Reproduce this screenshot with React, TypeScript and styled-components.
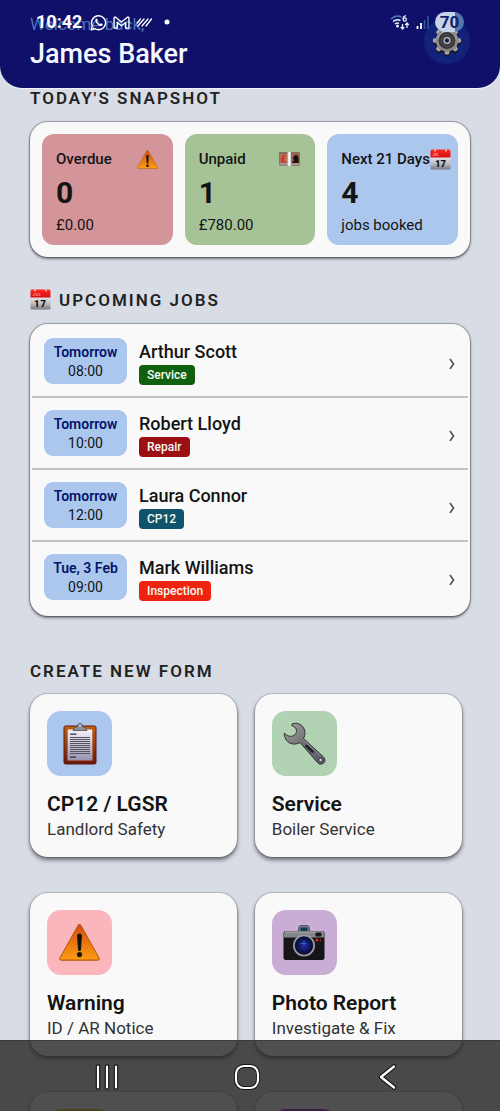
import React from "react";
import styled, { createGlobalStyle } from "styled-components";

const GlobalStyle = createGlobalStyle`
  *, *::before, *::after { box-sizing: border-box; }
  body { margin: 0; background: #d8dce5; }
  h1, h2, h3, p, ul { margin: 0; padding: 0; }
  button { font: inherit; color: inherit; border: 0; margin: 0; padding: 0; cursor: pointer; text-align: left; }
  svg { display: block; flex: none; }
`;

const Screen = styled.div`
  position: relative;
  height: 100vh;
  overflow: hidden;
  background: #d8dce5;
  color: #141414;
  font-family: Roboto, "Liberation Sans", sans-serif;
`;

/* ---------- header ---------- */

const Header = styled.header`
  display: flex;
  justify-content: space-between;
  align-items: flex-start;
  height: 88px;
  padding: 13px 30px 0;
  border-radius: 0 0 22px 22px;
  background: #10106a;
  box-shadow: 0 1px 1px #f2f6fa;
`;

const Greeting = styled.p`
  font-size: 17px;
  line-height: 22px;
  color: #4f74b8;
`;

const UserName = styled.h1`
  font-size: 27px;
  font-weight: 500;
  line-height: 38px;
  color: #f4f9ff;
`;

const SettingsButton = styled.button`
  display: grid;
  place-items: center;
  width: 46px;
  height: 46px;
  margin-top: 5px;
  border-radius: 50%;
  background: #12227a;
`;

const StatusBar = styled.div`
  position: absolute;
  top: 0;
  left: 0;
  right: 0;
  display: flex;
  justify-content: space-between;
  align-items: center;
  height: 44px;
  padding: 0 36px;
  color: #ffffff;
  pointer-events: none;
`;

const StatusGroup = styled.div`
  display: flex;
  align-items: center;
  gap: 6px;
`;

const Clock = styled.span`
  margin-right: 2px;
  font-size: 18px;
  font-weight: 700;
  line-height: 20px;
`;

const Battery = styled.span`
  width: 29px;
  height: 20px;
  border-radius: 10px;
  background: linear-gradient(90deg, #c6d1ea 70%, #5478ae 70%);
  color: #0d2468;
  font-size: 17px;
  font-weight: 700;
  line-height: 20px;
  text-align: center;
`;

/* ---------- sections ---------- */

const Content = styled.main`
  padding: 0 30px;
`;

const SectionTitle = styled.h2<{ $top: number }>`
  display: flex;
  align-items: center;
  gap: 8px;
  margin-top: ${(p) => p.$top}px;
  font-size: 17px;
  font-weight: 600;
  line-height: 20px;
  letter-spacing: 2px;
  color: #222222;
`;

const Panel = styled.section`
  border-radius: 18px;
  background: #f9f9f9;
  box-shadow: 0 0 1px 1px rgba(0, 0, 0, 0.3), 0 2px 3px rgba(0, 0, 0, 0.45);
`;

const Snapshot = styled(Panel)`
  display: grid;
  grid-template-columns: repeat(3, minmax(0, 1fr));
  gap: 12px;
  margin-top: 14px;
  padding: 12px;
`;

const Tile = styled.article<{ $tone: string }>`
  padding: 14px 8px 11px 14px;
  border-radius: 12px;
  background: ${(p) => p.$tone};
`;

const TileHead = styled.div<{ $inset: number }>`
  display: flex;
  justify-content: space-between;
  align-items: center;
  height: 22px;
  padding-right: ${(p) => p.$inset}px;
`;

const TileLabel = styled.h3`
  font-size: 15px;
  font-weight: 500;
  line-height: 22px;
  white-space: nowrap;
`;

const TileValue = styled.p`
  font-size: 30px;
  font-weight: 700;
  line-height: 46px;
`;

const TileNote = styled.p`
  font-size: 15px;
  line-height: 18px;
`;

/* ---------- jobs ---------- */

const JobList = styled(Panel).attrs({ as: "ul" })`
  margin-top: 14px;
  padding: 2px;
  list-style: none;
`;

const JobItem = styled.li`
  border-bottom: 2px solid #c2c2c2;
  &:last-child { border-bottom-color: transparent; }
`;

const JobButton = styled.button`
  display: flex;
  align-items: center;
  width: 100%;
  height: 70px;
  padding: 0 12px;
  background: none;
`;

const When = styled.span`
  display: flex;
  flex-direction: column;
  align-items: center;
  min-width: 83px;
  padding: 5px 9px 3px;
  border-radius: 9px;
  background: #abc7ee;
  font-size: 14px;
  line-height: 19px;
`;

const Day = styled.strong`
  font-weight: 600;
  color: #04146a;
`;

const Who = styled.span`
  display: flex;
  flex-direction: column;
  align-items: flex-start;
  flex: 1;
  margin-left: 12px;
  padding-top: 2px;
`;

const Customer = styled.span`
  font-size: 18px;
  font-weight: 500;
  line-height: 26px;
`;

const Tag = styled.span<{ $tone: string }>`
  padding: 0 8px;
  border-radius: 4px;
  background: ${(p) => p.$tone};
  color: #f4fbf4;
  font-size: 12px;
  font-weight: 500;
  line-height: 20px;
`;

/* ---------- forms ---------- */

const FormGrid = styled.div`
  display: grid;
  grid-template-columns: 47% 47%;
  gap: 36px 18px;
  margin-top: 13px;
`;

const FormCard = styled.button`
  display: flex;
  flex-direction: column;
  align-items: flex-start;
  padding: 17px 17px 15px;
  border-radius: 18px;
  background: #f9f9f9;
  box-shadow: 0 0 1px 1px rgba(0, 0, 0, 0.16), 0 3px 4px rgba(0, 0, 0, 0.5);
`;

const FormIcon = styled.span<{ $tone: string }>`
  display: grid;
  place-items: center;
  width: 65px;
  height: 65px;
  margin-bottom: 15px;
  border-radius: 14px;
  background: ${(p) => p.$tone};
`;

const FormName = styled.span`
  font-size: 21px;
  font-weight: 600;
  line-height: 26px;
`;

const FormNote = styled.span`
  font-size: 17px;
  line-height: 25px;
  color: #333333;
`;

/* ---------- system navigation ---------- */

const NavBar = styled.nav`
  position: absolute;
  left: 0;
  right: 0;
  bottom: 0;
  display: flex;
  justify-content: space-between;
  align-items: center;
  height: 71px;
  padding: 2px 95px 0 89px;
  border-top: 1px solid #3c3d38;
  background: rgba(36, 36, 36, 0.8);
`;

const NavButton = styled.button`
  display: grid;
  place-items: center;
  width: 35px;
  height: 44px;
  background: none;
`;

/* ---------- drawings ---------- */

const Calendar = ({ size = 21 }: { size?: number }) => (
  <svg width={size} height={size} viewBox="0 0 42 42" aria-hidden="true">
    <defs>
      <linearGradient id="calPage" x1="0" y1="0" x2="0" y2="1">
        <stop offset="0" stopColor="#f2f2f4" />
        <stop offset="0.6" stopColor="#bcbcc4" />
        <stop offset="1" stopColor="#77777f" />
      </linearGradient>
      <linearGradient id="calTop" x1="0" y1="0" x2="0" y2="1">
        <stop offset="0" stopColor="#ff2a20" />
        <stop offset="1" stopColor="#d40d10" />
      </linearGradient>
    </defs>
    <rect x="1" y="12" width="40" height="29" rx="2" fill="url(#calPage)" />
    <path d="M1 17V4q0-3 3-3h34q3 0 3 3v13z" fill="url(#calTop)" />
    <circle cx="10" cy="3" r="2" fill="#f6c9c6" />
    <circle cx="32" cy="3" r="2" fill="#f6c9c6" />
    <text x="5" y="14" fontFamily="Roboto, sans-serif" fontSize="7" fontWeight="700" fill="#ffb0aa">JUL</text>
    <text x="21" y="36" textAnchor="middle" fontFamily="Roboto, sans-serif" fontSize="19" fontWeight="900" fill="#111">17</text>
  </svg>
);

const Warning = ({ size }: { size: number }) => (
  <svg width={size} height={size} viewBox="0 0 40 40" aria-hidden="true">
    <defs>
      <linearGradient id="warn" x1="0" y1="0" x2="0" y2="1">
        <stop offset="0" stopColor="#d8481a" />
        <stop offset="0.5" stopColor="#e8760f" />
        <stop offset="1" stopColor="#fb9d12" />
      </linearGradient>
    </defs>
    <path d="M18.600 3.400q1.400-2 2.800 0L39 35q.8 2.200-1.400 2.200H2.400Q.2 37.200 1 35z" fill="url(#warn)" stroke="#b4580f" strokeWidth="1" />
    <path d="M17.600 13.500q0-2.300 2.400-2.300t2.400 2.300l-.9 13q-.2 1.800-1.500 1.800t-1.500-1.800z" fill="#15130f" />
    <circle cx="20" cy="31.800" r="2.500" fill="#15130f" />
  </svg>
);

const Banknotes = () => (
  <svg width="21" height="14" viewBox="0 0 42 28" aria-hidden="true">
    <rect x="0.500" y="0.500" width="41" height="27" rx="1" fill="#76584f" />
    <rect x="1" y="21" width="40" height="6" fill="#a99189" />
    <rect x="2" y="3" width="38" height="18" fill="#a0654f" />
    <rect x="3" y="4" width="13" height="17" fill="#b07a66" />
    <text x="4" y="20" fontFamily="Roboto, sans-serif" fontSize="18" fontWeight="900" fill="#e2281c">£</text>
    <path d="M26 22q1-4 4-5-3-3-1-8 3-5 8-2 3 2 2 15z" fill="#17110f" />
    <rect x="17" y="0" width="7" height="28" fill="#d5d5d8" />
    <rect x="19" y="0" width="3" height="28" fill="#f5f5f7" />
  </svg>
);

const Gear = () => (
  <svg width="30" height="30" viewBox="0 0 60 60" aria-hidden="true">
    <defs>
      <linearGradient id="gear" x1="0" y1="0" x2="0" y2="1">
        <stop offset="0" stopColor="#b9b9b9" />
        <stop offset="1" stopColor="#807d79" />
      </linearGradient>
    </defs>
    {[{ dy: 4, fill: "#17161d" }, { dy: 0, fill: "url(#gear)" }].map((layer) => (
      <g key={layer.dy} transform={`translate(0 ${layer.dy})`} fill={layer.fill}>
        <circle cx="30" cy="29" r="22" />
        {[0, 45, 90, 135, 180, 225, 270, 315].map((a) => (
          <path key={a} d="M24 10l2-8q4-2 8 0l2 8z" transform={`rotate(${a} 30 29)`} />
        ))}
      </g>
    ))}
    <circle cx="30" cy="29" r="17" fill="#343338" />
    <circle cx="30" cy="29" r="12" fill="none" stroke="#59585c" strokeWidth="2" />
    <circle cx="30" cy="29" r="7.500" fill="#a9a7a6" />
    <circle cx="30" cy="29" r="4" fill="#10154e" />
  </svg>
);

const Clipboard = () => (
  <svg width="34" height="42" viewBox="0 0 68 84" aria-hidden="true">
    <defs>
      <linearGradient id="board" x1="0" y1="0" x2="0" y2="1">
        <stop offset="0" stopColor="#c8600f" />
        <stop offset="1" stopColor="#6e1510" />
      </linearGradient>
      <linearGradient id="sheet" x1="0" y1="0" x2="0" y2="1">
        <stop offset="0" stopColor="#f4f4fa" />
        <stop offset="1" stopColor="#9a94b0" />
      </linearGradient>
    </defs>
    <rect x="2" y="6" width="64" height="76" rx="3" fill="url(#board)" stroke="#571b12" strokeWidth="2" />
    <path d="M9 14h50v61H9z" fill="#b9a596" />
    <path d="M10 13h48v61H10z" fill="url(#sheet)" />
    <path d="M14 22h13M14 68h12" stroke="#33333b" strokeWidth="2.500" />
    <path d="M14 29h40M14 33h40M14 37h40M14 41h40M14 45h40M14 49h40M14 53h40M14 57h40M14 61h40" stroke="#55535f" strokeWidth="2" />
    <path d="M20 15q2-7 9-8 0-6 5-6t5 6q7 1 9 8z" fill="#8d9097" stroke="#44464c" strokeWidth="1.500" />
    <circle cx="34" cy="5" r="2" fill="#dfe3e8" />
  </svg>
);

const Wrench = () => (
  <svg width="43" height="43" viewBox="0 0 86 86" aria-hidden="true">
    <defs>
      <linearGradient id="steel" x1="0" y1="0" x2="1" y2="1">
        <stop offset="0" stopColor="#a2a2a4" />
        <stop offset="0.450" stopColor="#737376" />
        <stop offset="1" stopColor="#5b5768" />
      </linearGradient>
    </defs>
    <path
      d="M18 4C30-1 43 7 44 21c0 5-1 8-3 12l40 37c5 5 3 13-4 14-3 1-6 0-8-3L34 41C22 48 8 43 4 31c-2-4-2-7-1-9 4 5 10 8 16 6 8-2 10-11 6-16-2-3-5-4-7-4z"
      fill="url(#steel)"
      stroke="#303036"
      strokeWidth="2"
    />
    <path d="M47 48l12 11" stroke="#25232d" strokeWidth="6" strokeLinecap="round" />
    <path d="M43 38l32 30" stroke="#a3a1ab" strokeWidth="1.500" />
    <circle cx="75" cy="76" r="3.500" fill="#dfeee0" stroke="#33303d" strokeWidth="2" />
  </svg>
);

const Camera = () => (
  <svg width="42" height="36" viewBox="0 0 84 72" aria-hidden="true">
    <defs>
      <radialGradient id="lens">
        <stop offset="0" stopColor="#2430a0" />
        <stop offset="0.500" stopColor="#141a70" />
        <stop offset="1" stopColor="#080a26" />
      </radialGradient>
    </defs>
    <path d="M30 14l2-10q1-3 4-3h12q3 0 4 3l2 10z" fill="#77797f" stroke="#3d3f45" strokeWidth="1.500" />
    <rect x="35" y="5" width="14" height="7" rx="1" fill="#153d63" />
    <rect x="1" y="12" width="82" height="58" rx="5" fill="#161618" />
    <path d="M2 25v-8q0-4 4-4h72q4 0 4 4v8z" fill="#85868b" />
    <path d="M4 14h76" stroke="#c9cacd" strokeWidth="1.500" />
    <rect x="65" y="15" width="12" height="8" rx="2" fill="#17181c" />
    <circle cx="42" cy="41" r="22" fill="#9b9ca3" />
    <circle cx="42" cy="41" r="18.500" fill="url(#lens)" />
    <path d="M35 37h12M42 31v9" stroke="#3063c4" strokeWidth="2" />
    <circle cx="68" cy="30" r="3" fill="#f02418" />
    <path d="M75 28v5" stroke="#8d2a25" strokeWidth="2" />
  </svg>
);

const Chevron = () => (
  <svg width="8" height="16" viewBox="0 0 8 16" aria-hidden="true">
    <path d="M2 6l3.500 5L2 16" fill="none" stroke="#5c5c5c" strokeWidth="1.800" />
  </svg>
);

const WhatsApp = () => (
  <svg width="17" height="17" viewBox="0 0 34 34" aria-hidden="true" fill="none" stroke="#fff" strokeWidth="2.800">
    <path d="M2.500 31.500l2-8A14 14 0 1 1 10 29.500z" strokeLinejoin="round" />
    <path d="M11 10q2-2 3.500 0l1 3-1.500 2q1.500 4 5.500 5.500l2-2 3.500 1.500q1 2-1 3.500-3 1.500-8-2-7-6-5-11.500z" fill="#fff" stroke="none" />
  </svg>
);

const Mail = () => (
  <svg width="17" height="13" viewBox="0 0 36 28" aria-hidden="true" fill="none" stroke="#fff" strokeWidth="3" strokeLinejoin="round">
    <path d="M2 26V4q0-2 2.500-2L18 13 31.500 2Q34 2 34 4v22h-7V14l-9 7-9-7v12z" />
  </svg>
);

const Stripes = () => (
  <svg width="16" height="10" viewBox="0 0 32 20" aria-hidden="true" stroke="#fff" strokeWidth="2.600" strokeLinecap="round">
    <path d="M2 12L9 4M4 18L16 4M12 18L24 4M20 18L31 4" />
  </svg>
);

const Wifi = () => (
  <svg width="20" height="16" viewBox="0 0 40 32" aria-hidden="true" fill="none" stroke="#e6f1fb" strokeWidth="3">
    <path d="M2 10Q12 1 23 6" stroke="#4c7fb4" />
    <path d="M6 15q7-6 15-2M10 20q4-3 8-1" />
    <circle cx="15" cy="24" r="1.500" fill="#e6f1fb" />
    <path d="M32 3q-6 2-6 7" strokeWidth="2.500" />
    <circle cx="29.500" cy="11" r="3.200" strokeWidth="2.500" />
    <path d="M25 20v9m-3.500-3l3.500 4 3.500-4M34 28v-9m-3.500 3l3.500-4 3.500 4" strokeWidth="2.500" />
  </svg>
);

const Signal = () => (
  <svg width="13" height="13" viewBox="0 0 13 13" aria-hidden="true">
    <path d="M1.500 10v3M5 7v6" stroke="#fff" strokeWidth="1.800" />
    <path d="M8.500 4v9M12 0v13" stroke="#2b5f9c" strokeWidth="1.500" />
  </svg>
);

/* ---------- data ---------- */

const jobs = [
  { day: "Tomorrow", time: "08:00", name: "Arthur Scott", tag: "Service", tone: "#10600f" },
  { day: "Tomorrow", time: "10:00", name: "Robert Lloyd", tag: "Repair", tone: "#9c1013" },
  { day: "Tomorrow", time: "12:00", name: "Laura Connor", tag: "CP12", tone: "#10536c" },
  { day: "Tue, 3 Feb", time: "09:00", name: "Mark Williams", tag: "Inspection", tone: "#ee2410" },
];

const forms = [
  { name: "CP12 / LGSR", note: "Landlord Safety", tone: "#abc7ee", icon: <Clipboard /> },
  { name: "Service", note: "Boiler Service", tone: "#b1d3b3", icon: <Wrench /> },
  { name: "Warning", note: "ID / AR Notice", tone: "#f9b7bc", icon: <Warning size={41} /> },
  { name: "Photo Report", note: "Investigate & Fix", tone: "#c9add4", icon: <Camera /> },
];

const upcomingTones = ["#e0a020", "#9b00be"];

export default function App() {
  return (
    <>
      <GlobalStyle />
      <Screen>
        <Header>
          <div>
            <Greeting>Welcome back,</Greeting>
            <UserName>James Baker</UserName>
          </div>
          <SettingsButton aria-label="Settings">
            <Gear />
          </SettingsButton>
        </Header>
        <StatusBar>
          <StatusGroup>
            <Clock>10:42</Clock>
            <WhatsApp />
            <Mail />
            <Stripes />
            <svg width="24" height="6" viewBox="0 0 24 6" aria-hidden="true">
              <circle cx="9" cy="3" r="2.500" fill="#fff" />
            </svg>
          </StatusGroup>
          <StatusGroup>
            <Wifi />
            <Signal />
            <Battery>70</Battery>
          </StatusGroup>
        </StatusBar>

        <Content>
          <SectionTitle $top={0}>TODAY'S SNAPSHOT</SectionTitle>
          <Snapshot>
            <Tile $tone="#d4959a">
              <TileHead $inset={7}>
                <TileLabel>Overdue</TileLabel>
                <Warning size={21} />
              </TileHead>
              <TileValue>0</TileValue>
              <TileNote>£0.00</TileNote>
            </Tile>
            <Tile $tone="#a6c398">
              <TileHead $inset={7}>
                <TileLabel>Unpaid</TileLabel>
                <Banknotes />
              </TileHead>
              <TileValue>1</TileValue>
              <TileNote>£780.00</TileNote>
            </Tile>
            <Tile $tone="#abc7ee">
              <TileHead $inset={0}>
                <TileLabel>Next 21 Days</TileLabel>
                <Calendar />
              </TileHead>
              <TileValue>4</TileValue>
              <TileNote>jobs booked</TileNote>
            </Tile>
          </Snapshot>

          <SectionTitle $top={32}>
            <Calendar />
            UPCOMING JOBS
          </SectionTitle>
          <JobList>
            {jobs.map((job) => (
              <JobItem key={job.name}>
                <JobButton>
                  <When>
                    <Day>{job.day}</Day>
                    <span>{job.time}</span>
                  </When>
                  <Who>
                    <Customer>{job.name}</Customer>
                    <Tag $tone={job.tone}>{job.tag}</Tag>
                  </Who>
                  <Chevron />
                </JobButton>
              </JobItem>
            ))}
          </JobList>

          <SectionTitle $top={45}>CREATE NEW FORM</SectionTitle>
          <FormGrid>
            {forms.map((form) => (
              <FormCard key={form.name}>
                <FormIcon $tone={form.tone}>{form.icon}</FormIcon>
                <FormName>{form.name}</FormName>
                <FormNote>{form.note}</FormNote>
              </FormCard>
            ))}
            {upcomingTones.map((tone) => (
              <FormCard key={tone} aria-label="More forms">
                <FormIcon $tone={tone} />
              </FormCard>
            ))}
          </FormGrid>
        </Content>

        <NavBar>
          <NavButton aria-label="Recent apps">
            <svg width="26" height="26" viewBox="0 0 26 26" aria-hidden="true" strokeLinecap="round">
              <path d="M4 2.500v21M13 2.500v21M22 2.500v21" stroke="#111" strokeWidth="4.500" />
              <path d="M4 2.500v21M13 2.500v21M22 2.500v21" stroke="#fff" strokeWidth="2.200" />
            </svg>
          </NavButton>
          <NavButton aria-label="Home">
            <svg width="26" height="26" viewBox="0 0 26 26" aria-hidden="true" fill="none">
              <rect x="2" y="2" width="22" height="22" rx="8" stroke="#111" strokeWidth="4" />
              <rect x="2" y="2" width="22" height="22" rx="8" stroke="#fff" strokeWidth="2.200" />
            </svg>
          </NavButton>
          <NavButton aria-label="Back">
            <svg width="26" height="26" viewBox="0 0 26 26" aria-hidden="true" fill="none" strokeLinecap="round" strokeLinejoin="round">
              <path d="M19 2.500L6 13 19 23.500" stroke="#111" strokeWidth="4.500" />
              <path d="M19 2.500L6 13 19 23.500" stroke="#fff" strokeWidth="2.400" />
            </svg>
          </NavButton>
        </NavBar>
      </Screen>
    </>
  );
}
